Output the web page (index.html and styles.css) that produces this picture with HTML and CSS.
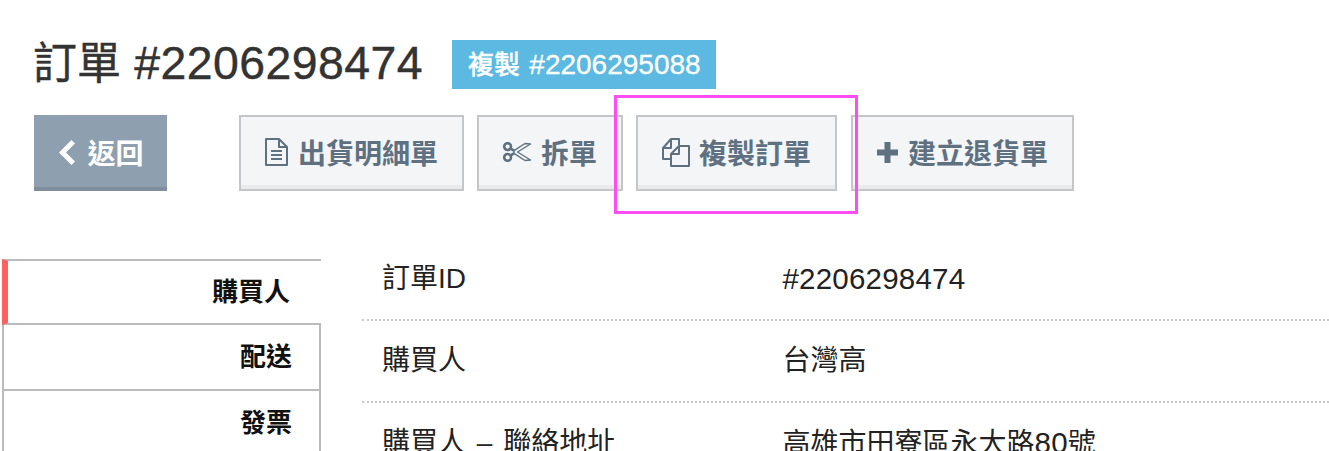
FILE: index.html
```html
<!DOCTYPE html>
<html lang="zh-Hant">
<head>
    <meta charset="UTF-8">
    <meta name="viewport" content="width=device-width, initial-scale=1.0">
    <title>訂單 #2206298474</title>
    <link rel="stylesheet" href="styles.css">
</head>
<body>
    <div class="page">
        <div class="title-row">
            <h1>訂單 <span class="num">#2206298474</span></h1>
            <span class="badge">複製 <span class="num">#2206295088</span></span>
        </div>

        <div class="actions">
            <a href="#" class="btn btn-back">
                <svg class="icon-chevron" viewBox="0 0 16 25"><path d="M12.5 0 L16 3.5 L7 12.5 L16 21.5 L12.5 25 L0 12.5 Z" fill="#fff"/></svg>
                返回
            </a>
            <div class="btn-group">
                <a href="#" class="btn">
                    <svg class="icon icon-doc" viewBox="0 0 25 28" fill="none" stroke="#5f7080" stroke-width="2" stroke-linejoin="round">
                        <path d="M2 1 H15 L23 9 V27 H2 Z"/>
                        <path d="M15 1 V9 H23"/>
                        <path d="M7 13 H18 M7 17 H18 M7 21 H18"/>
                    </svg>
                    出貨明細單
                </a>
                <a href="#" class="btn">
                    <svg class="icon icon-scissors" viewBox="-1 0 30 20" fill="none" stroke="#5f7080" stroke-linejoin="round">
                        <circle cx="4.6" cy="4.6" r="3.4" stroke-width="2.6"/>
                        <circle cx="4.6" cy="15.4" r="3.4" stroke-width="2.6"/>
                        <path d="M7.6 6.6 L11 8.6 M7.6 13.4 L11 11.4" stroke-width="2.6"/>
                        <path d="M11 11.4 L22 18.5 L27.5 18 L14.5 10 L27.5 2 L22 1.5 L11 8.6 Z" stroke-width="1.4"/>
                    </svg>
                    拆單
                </a>
                <a href="#" class="btn">
                    <svg class="icon icon-copy" viewBox="-1 0 29 29" fill="none" stroke="#5f7080" stroke-width="2" stroke-linejoin="round">
                        <path d="M9 21 H1 V10 L9 1 H17 V7"/>
                        <path d="M9 1 V10 H1"/>
                        <path d="M9 16 L17 8 H27 V28 H9 Z"/>
                        <path d="M17 8 V16 H9"/>
                    </svg>
                    複製訂單
                </a>
                <a href="#" class="btn btn-return">
                    <svg class="icon icon-plus" viewBox="0 0 23 23"><path d="M8.5 1 H14.5 V8.5 H22 V14.5 H14.5 V22 H8.5 V14.5 H1 V8.5 H8.5 Z" fill="#5f7080"/></svg>
                    建立退貨單
                </a>
            </div>
        </div>

        <div class="detail">
            <ul class="side-nav">
                <li class="active">購買人</li>
                <li>配送</li>
                <li>發票</li>
            </ul>
            <div class="info">
                <div class="info-row"><span class="info-label">訂單ID</span><span><span class="num">#2206298474</span></span></div>
                <div class="info-row"><span class="info-label">購買人</span><span>台灣高</span></div>
                <div class="info-row"><span class="info-label label-spaced">購買人 – 聯絡地址</span><span>高雄市田寮區永大路<span class="num">80</span>號</span></div>
            </div>
        </div>
    </div>

    <!-- highlight drawn over the screenshot -->
    <div class="highlight"></div>
</body>
</html>
```

FILE: styles.css
```css
html, body {
    height: 100%;
    overflow: hidden;
}

body {
    font-family: "Liberation Sans", "Noto Sans CJK TC", sans-serif;
    background-color: #ffffff;
    color: #333;
    margin: 0;
    padding: 0;
    position: relative;
}

.page {
    padding-top: 40px;
}

.num {
    font-size: 1.055em;
    letter-spacing: 0.2px;
}

.title-row {
    display: flex;
    align-items: flex-start;
    gap: 29px;
    padding-left: 34px;
    height: 75px;
}

.title-row h1 {
    margin: 0 0 0 -1px;
    font-size: 44px;
    font-weight: 400;
    line-height: 46px;
    color: #333;
    -webkit-text-stroke: 0.4px #333;
    white-space: nowrap;
}

.title-row h1 .num {
    margin-left: 1px;
    letter-spacing: 0.45px;
}

.badge {
    box-sizing: border-box;
    width: 264px;
    background-color: #5cb9e1;
    color: #fff;
    font-size: 26px;
    font-weight: 500;
    height: 49px;
    line-height: 49px;
    padding: 0 16px;
    white-space: nowrap;
    -webkit-text-stroke: 0.3px #fff;
}

.badge .num {
    font-size: 28px;
    margin-left: 2px;
    letter-spacing: 0;
}

.actions {
    display: flex;
    padding-left: 34px;
    gap: 72px;
    height: 144px;
}

.btn-group {
    display: flex;
    gap: 13px;
}

.btn {
    display: flex;
    align-items: center;
    justify-content: center;
    gap: 9px;
    box-sizing: border-box;
    height: 76px;
    padding: 0 24px 2px 23px;
    background-color: #f3f5f7;
    border: 2px solid #c4c7ca;
    box-shadow: inset 0 -4px 0 #e9ebeb;
    color: #5f7080;
    font-size: 28px;
    font-weight: 700;
    text-decoration: none;
    white-space: nowrap;
}

.btn-return {
    margin-left: 1px;
}

.btn-back {
    width: 133px;
    padding: 0 0 2px 2px;
    gap: 12px;
    background-color: #8e9fb0;
    border: none;
    box-shadow: inset 0 -4px 0 #7f8d9c;
    color: #fff;
}

.icon-doc {
    width: 25px;
    height: 28px;
}

.icon-scissors {
    width: 30px;
    height: 20px;
}

.icon-copy {
    width: 29px;
    height: 29px;
}

.icon-plus {
    width: 23px;
    height: 23px;
}

.icon-chevron {
    width: 16px;
    height: 25px;
}

.detail {
    display: flex;
    gap: 41px;
}

.side-nav {
    list-style-type: none;
    margin: 0 0 0 2px;
    padding: 0;
    width: 319px;
    flex-shrink: 0;
}

.side-nav li {
    box-sizing: border-box;
    height: 66px;
    padding-right: 27px;
    border: 2px solid #bbb;
    border-top: none;
    text-align: right;
    font-size: 26px;
    font-weight: 700;
    line-height: 65px;
    color: #111;
}

.side-nav li.active {
    border-top: 2px solid #bbb;
    border-left: 6px solid #ff5f60;
    border-right: none;
    padding-right: 31px;
    line-height: 62px;
}

.info {
    flex: 1;
}

.info-row {
    display: flex;
    box-sizing: border-box;
    height: 82px;
    padding: 20px 0 0 20px;
    border-bottom: 2px dotted #c8c8c8;
    font-size: 28px;
    line-height: 40px;
    color: #222;
}

.info-row:first-child {
    height: 62px;
    padding-top: 0;
}

.info-label {
    width: 400.5px;
    flex-shrink: 0;
}

.label-spaced {
    word-spacing: 3px;
}

.highlight {
    position: absolute;
    left: 614px;
    top: 95px;
    width: 238px;
    height: 113px;
    border: 3px solid #ff4df5;
}
```
